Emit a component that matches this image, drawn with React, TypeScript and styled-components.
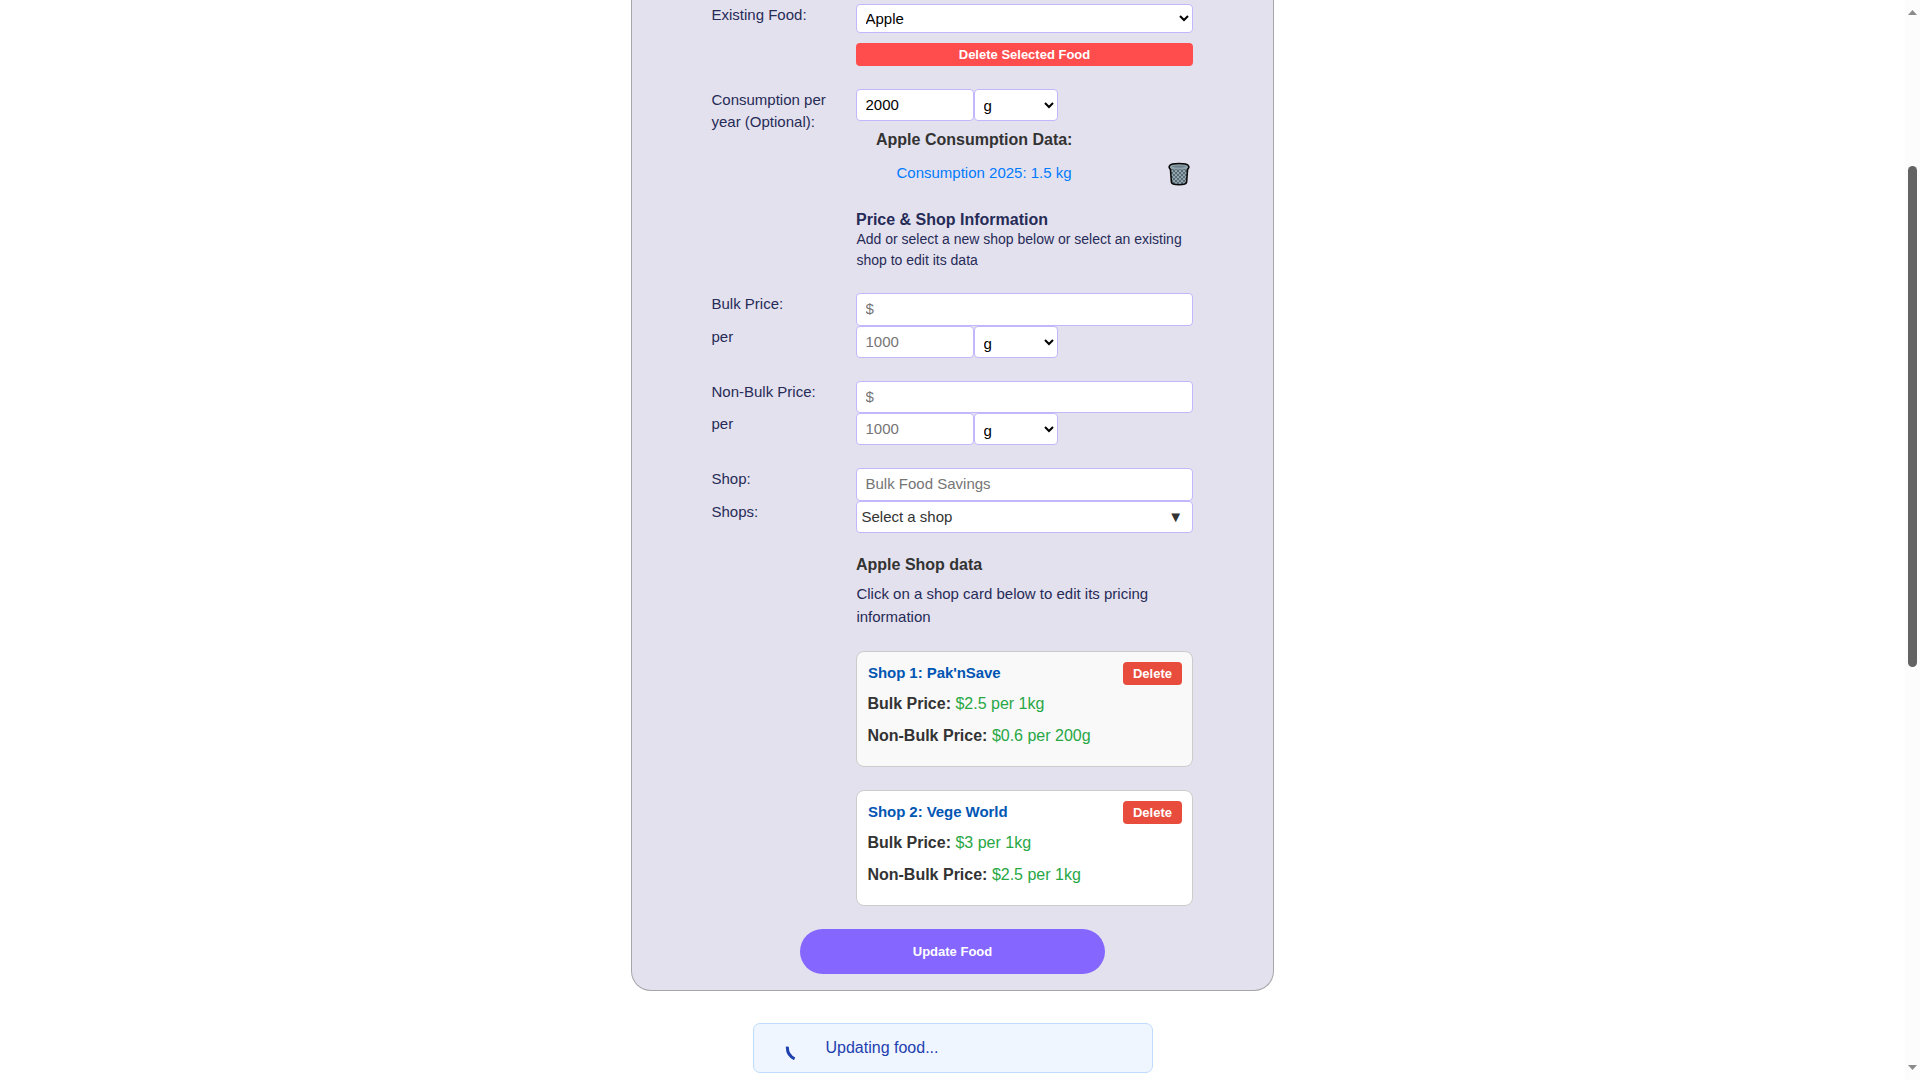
import React from "react";
import styled, { createGlobalStyle } from "styled-components";

const GlobalStyle = createGlobalStyle`
  *, *::before, *::after { box-sizing: border-box; }
  html, body { height: 100%; margin: 0; overflow: hidden; background: #fff; }
  body, input, select, button { font-family: "Liberation Sans", Arial, sans-serif; }
  h3, h4, p, ul { margin: 0; padding: 0; }
`;

const Viewport = styled.div`
  display: flex;
  width: 100vw;
  height: 1080px;
  overflow: hidden;
`;

const Page = styled.main`
  flex: 1;
  display: flex;
  flex-direction: column;
  align-items: center;
`;

const FormPanel = styled.form`
  width: 643px;
  height: 991px;
  flex-shrink: 0;
  padding: 4px 80px 0 79px;
  display: flex;
  flex-direction: column;
  background: #e4e1ee;
  border: 1px solid #a6a5aa;
  border-top: 0;
  border-radius: 0 0 20px 20px;
`;

const Row = styled.div<{ $gap?: number }>`
  display: grid;
  grid-template-columns: 145px 337px;
  align-items: start;
  margin-top: ${(p) => p.$gap ?? 0}px;
`;

const Label = styled.label`
  width: 125px;
  padding-left: 0.5px;
  font-size: 15px;
  line-height: 22px;
  color: #262b57;
`;

const Fields = styled.div`
  grid-column: 2;
  display: flex;
  flex-direction: column;
`;

const Inline = styled.div`
  display: flex;
`;

const control = `
  border: 1px solid #c3b6fd;
  border-radius: 4px;
  background: #fff;
  font-size: 15px;
  color: #000;
  margin: 0;
`;

const Input = styled.input<{ $w?: number; $h?: number }>`
  ${control}
  width: ${(p) => p.$w ?? 337}px;
  height: ${(p) => p.$h ?? 32}px;
  padding: 0 8px 2px 8.5px;
  outline: none;
  &::placeholder { color: #757575; }
`;

const Select = styled.select<{ $w?: number; $h?: number; $drop?: number }>`
  ${control}
  width: ${(p) => p.$w ?? 337}px;
  height: ${(p) => p.$h ?? 32}px;
  padding: ${(p) => p.$drop ?? 0}px 0 0 4.5px;
`;

const DeleteFood = styled.button`
  height: 23px;
  margin-top: 10px;
  padding: 0;
  border: 0;
  border-radius: 4px;
  background: #ff4d4d;
  color: #fff;
  font-size: 13px;
  font-weight: bold;
`;

const ConsumptionTitle = styled.h4`
  margin: 9px 0 0 20px;
  font-size: 16px;
  line-height: 20px;
  color: #333;
`;

const ConsumptionItem = styled.div`
  display: flex;
  align-items: center;
  justify-content: space-between;
  height: 26px;
  margin-top: 11px;
  padding: 0 3px 0 40.5px;
  font-size: 15px;
  line-height: 20px;
  color: #007bff;
`;

const ItemText = styled.span`
  margin-top: -2px;
`;

const SectionTitle = styled.h3<{ $color: string }>`
  font-size: 16px;
  line-height: 20px;
  color: ${(p) => p.$color};
`;

const Hint = styled.p<{ $size: number; $line: number; $gap: number }>`
  margin-top: ${(p) => p.$gap}px;
  padding-left: 0.4px;
  font-size: ${(p) => p.$size}px;
  line-height: ${(p) => p.$line}px;
  color: #262b57;
`;

const ShopPicker = styled.div`
  ${control}
  height: 32px;
  display: flex;
  align-items: center;
  justify-content: space-between;
  padding: 0 9px 2px 4.5px;
  color: #333;
`;

const Card = styled.article<{ $active?: boolean }>`
  height: 116px;
  padding: 10px 10px 0 11px;
  border: 1px solid #ccc;
  border-radius: 8px;
  background: ${(p) => (p.$active ? "#f9f9f9" : "#fff")};
  & + & { margin-top: 23px; }
`;

const CardHead = styled.div`
  display: flex;
  align-items: center;
  justify-content: space-between;
  height: 23px;
`;

const CardTitle = styled.h4`
  margin-top: -2px;
  font-size: 15px;
  line-height: 20px;
  letter-spacing: -0.06px;
  color: #0056b3;
`;

const DeleteShop = styled.button`
  width: 59px;
  height: 23px;
  padding: 0;
  border: 0;
  border-radius: 4px;
  background: #e74c3c;
  color: #fff;
  font-size: 13px;
  font-weight: bold;
`;

const PriceLine = styled.p<{ $gap: number }>`
  margin-top: ${(p) => p.$gap}px;
  margin-left: -0.6px;
  font-size: 16px;
  line-height: 20px;
  color: #28a745;
`;

const PriceLabel = styled.strong`
  color: #333;
`;

const Submit = styled.button`
  width: 305px;
  height: 45px;
  margin: 23px 0 0 89px;
  border: 0;
  border-radius: 23px;
  background: #8566ff;
  color: #fff;
  font-size: 13px;
  font-weight: bold;
`;

const Toast = styled.div`
  width: 400px;
  height: 50px;
  flex-shrink: 0;
  margin: 32px 0 0 1px;
  padding-left: 31px;
  display: flex;
  align-items: center;
  border: 1px solid #bfdbfe;
  border-radius: 7px;
  background: #eff6ff;
  color: #1e40af;
  font-size: 16px;
`;

const Spinner = styled.svg`
  margin-top: 4px;
`;

const ToastText = styled.span`
  margin: 0 0 0 20.5px;
`;

const Scrollbar = styled.div`
  width: 15px;
  height: 1080px;
  padding: 10px 3px;
  display: flex;
  flex-direction: column;
  background: #fcfcfc;
`;

const Thumb = styled.div`
  width: 9px;
  height: 501px;
  margin: 151px 0 auto;
  border-radius: 5px;
  background: #636363;
`;

const Arrow = styled.svg`
  display: block;
  flex-shrink: 0;
`;

const TrashIcon = () => (
  <svg width="22" height="26" viewBox="0 0 22 26">
    <defs>
      <pattern id="mesh" width="4" height="4" patternUnits="userSpaceOnUse">
        <rect width="4" height="4" fill="#90a4ae" />
        <path d="M0 0L4 4M4 0L0 4" stroke="#55646c" strokeWidth="0.9" />
      </pattern>
    </defs>
    <path
      d="M2.4 7.5L3.4 21.2C3.6 23 7 23.8 11 23.8S18.4 23 18.6 21.2L19.6 7.5Z"
      fill="url(#mesh)"
      stroke="#0b0b0b"
      strokeWidth="1.6"
    />
    <path
      d="M1.8 4.4C3.6 1.6 18.4 1.6 20.2 4.4C21.2 6 20.8 7.6 19.2 8C16 8.8 6 8.8 2.8 8C1.2 7.6 .8 6 1.8 4.4Z"
      fill="#90a4ae"
    />
    <path
      d="M2.6 8.2C.8 7.2 .8 5.6 1.8 4.4C3.6 1.8 18.4 1.8 20.2 4.4C21.2 5.6 21.2 7.2 19.4 8.2"
      stroke="#0b0b0b"
      strokeWidth="1.6"
      fill="none"
    />
    <path d="M3.8 5.5C7 4.2 15 4.2 18.2 5.5C15 7.2 7 7.2 3.8 5.5Z" fill="#6f828c" />
  </svg>
);

const Amount = ({ value, drop }: { value?: string; drop?: number }) => (
  <Inline>
    <Input $w={118} defaultValue={value} placeholder="1000" />
    <Select $w={84} $drop={drop} defaultValue="g">
      <option>g</option>
      <option>kg</option>
    </Select>
  </Inline>
);

const shops = [
  { name: "Shop 1: Pak'nSave", bulk: "$2.5 per 1kg", nonBulk: "$0.6 per 200g" },
  { name: "Shop 2: Vege World", bulk: "$3 per 1kg", nonBulk: "$2.5 per 1kg" },
];

export default function App() {
  return (
    <Viewport>
      <GlobalStyle />
      <Page>
        <FormPanel onSubmit={(e) => e.preventDefault()}>
          <Row>
            <Label>Existing Food:</Label>
            <Fields>
              <Select $h={29} defaultValue="Apple">
                <option>Apple</option>
              </Select>
              <DeleteFood type="button">Delete Selected Food</DeleteFood>
            </Fields>
          </Row>

          <Row $gap={23}>
            <Label>Consumption per year (Optional):</Label>
            <Fields>
              <Amount value="2000" />
              <ConsumptionTitle>Apple Consumption Data:</ConsumptionTitle>
              <ConsumptionItem>
                <ItemText>Consumption 2025: 1.5 kg</ItemText>
                <TrashIcon />
              </ConsumptionItem>
            </Fields>
          </Row>

          <Row $gap={23}>
            <Fields>
              <SectionTitle $color="#262b57">Price &amp; Shop Information</SectionTitle>
              <Hint $size={14} $line={21} $gap={-1}>
                Add or select a new shop below or select an existing shop to edit its data
              </Hint>
            </Fields>
          </Row>

          <Row $gap={22}>
            <Label>Bulk Price:</Label>
            <Input placeholder="$" $h={33} />
          </Row>
          <Row>
            <Label>per</Label>
            <Amount drop={2} />
          </Row>

          <Row $gap={23}>
            <Label>Non-Bulk Price:</Label>
            <Input placeholder="$" />
          </Row>
          <Row>
            <Label>per</Label>
            <Amount drop={2} />
          </Row>

          <Row $gap={23}>
            <Label>Shop:</Label>
            <Input placeholder="Bulk Food Savings" $h={33} />
          </Row>
          <Row>
            <Label>Shops:</Label>
            <ShopPicker>
              <span>Select a shop</span>
              <span>▼</span>
            </ShopPicker>
          </Row>

          <Row $gap={22}>
            <Fields>
              <SectionTitle $color="#333">Apple Shop data</SectionTitle>
              <Hint $size={15} $line={23} $gap={7}>
                Click on a shop card below to edit its pricing information
              </Hint>
            </Fields>
          </Row>

          <Row $gap={23}>
            <Fields>
              {shops.map((s, i) => (
                <Card key={s.name} $active={i === 0}>
                  <CardHead>
                    <CardTitle>{s.name}</CardTitle>
                    <DeleteShop type="button">Delete</DeleteShop>
                  </CardHead>
                  <PriceLine $gap={9}>
                    <PriceLabel>Bulk Price:</PriceLabel> {s.bulk}
                  </PriceLine>
                  <PriceLine $gap={12}>
                    <PriceLabel>Non-Bulk Price:</PriceLabel> {s.nonBulk}
                  </PriceLine>
                </Card>
              ))}
            </Fields>
          </Row>

          <Submit type="submit">Update Food</Submit>
        </FormPanel>

        <Toast>
          <Spinner width="20" height="20" viewBox="0 0 20 20" fill="none">
            <path
              d="M2.4 6.6C2 12 4.6 16.4 9.6 18.8"
              stroke="#1e40af"
              strokeWidth="3"
            />
          </Spinner>
          <ToastText>Updating food...</ToastText>
        </Toast>
      </Page>

      <Scrollbar>
        <Arrow width="9" height="5" viewBox="0 0 9 5">
          <path d="M4.5 0L9 5H0Z" fill="#8b8b8b" />
        </Arrow>
        <Thumb />
        <Arrow width="9" height="5" viewBox="0 0 9 5">
          <path d="M0 0H9L4.5 5Z" fill="#8b8b8b" />
        </Arrow>
      </Scrollbar>
    </Viewport>
  );
}
